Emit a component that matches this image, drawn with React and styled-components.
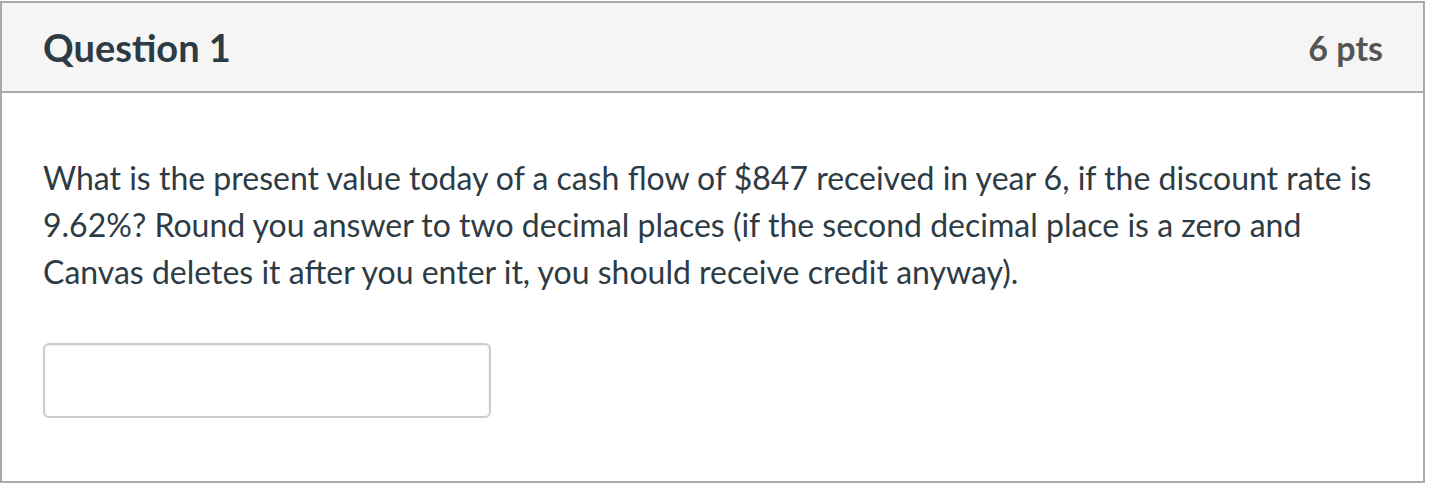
import React from "react";
import styled, { createGlobalStyle } from "styled-components";

const Global = createGlobalStyle`
  html, body { margin: 0; padding: 0; background: #fff; }
  body { font-family: Lato, "Noto Sans", sans-serif; }
`;

const Page = styled.div`
  padding-top: 1px;
  width: 1425px;
`;

const Card = styled.div`
  border: 2px solid #aaaaaa;
  background: #fff;
  box-sizing: border-box;
  width: 1425px;
  height: 482px;
  display: flex;
  flex-direction: column;
`;

const Header = styled.div`
  display: flex;
  align-items: center;
  justify-content: space-between;
  height: 88px;
  padding: 0 40px 0 41px;
  background: #f5f5f5;
  border-bottom: 2px solid #aaaaaa;
`;

const Title = styled.h2`
  margin: 0;
  font-family: Lato, sans-serif;
  font-weight: 700;
  font-size: 38px;
  color: #2d3b45;
`;

const Points = styled.span`
  font-family: Lato, sans-serif;
  font-weight: 700;
  font-size: 34px;
  color: #555555;
`;

const Body = styled.div`
  padding: 61px 40px 0 41px;
`;

const Text = styled.p`
  margin: 0;
  font-family: Lato, sans-serif;
  font-size: 32px;
  line-height: 47px;
  color: #2d3b45;
`;

const Answer = styled.input`
  display: block;
  margin-top: 48px;
  width: 448px;
  height: 75px;
  box-sizing: border-box;
  border: 2px solid #cccccc;
  border-radius: 6px;
  box-shadow: inset 0 1px 2px rgba(0, 0, 0, 0.08);
  background: #fff;
  outline: none;
`;

export default function App() {
  return (
    <>
      <Global />
      <Page>
        <Card>
          <Header>
            <Title>Question 1</Title>
            <Points>6 pts</Points>
          </Header>
          <Body>
            <Text>
              What is the present value today of a cash flow of $847 received in year 6, if the
              discount rate is 9.62%? Round you answer to two decimal places (if the second
              decimal place is a zero and Canvas deletes it after you enter it, you should
              receive credit anyway).
            </Text>
            <Answer type="text" aria-label="Answer" />
          </Body>
        </Card>
      </Page>
    </>
  );
}
